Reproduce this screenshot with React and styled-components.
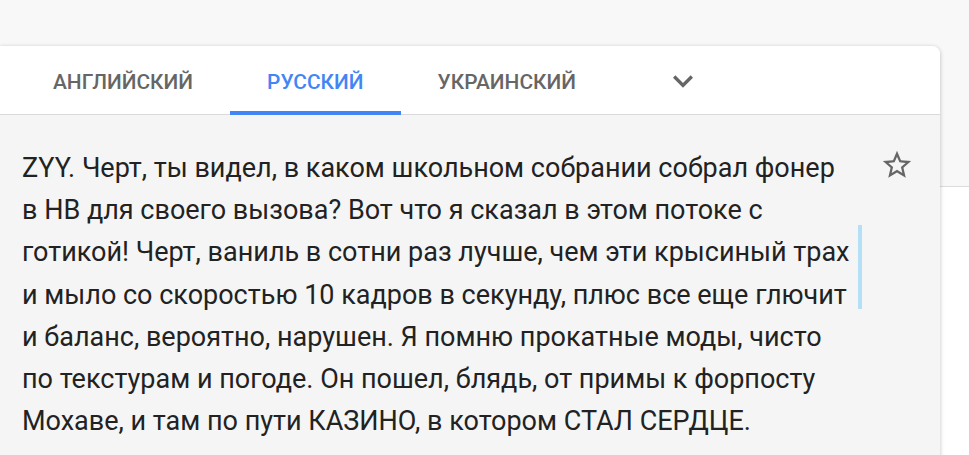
import styled, { createGlobalStyle } from "styled-components"

const GlobalStyle = createGlobalStyle`
    html, body {
        margin: 0;
        padding: 0;
        background: #f8f8f8;
        overflow: hidden;
        font-family: Roboto, "Liberation Sans", sans-serif;
    }
`

const Page = styled.div`
    display: flex;
    align-items: flex-start;
    padding-top: 46px;
    height: 455px;
    box-sizing: border-box;
`

const Card = styled.div`
    width: 940px;
    flex-shrink: 0;
    background: #f5f5f5;
    border-radius: 0 8px 0 0;
    box-shadow: 0 1px 4px rgba(0, 0, 0, 0.25);
    position: relative;
    z-index: 1;
    min-height: 420px;
`

const SidePanel = styled.div`
    flex: 1;
    margin-top: 140px;
    height: 300px;
    background: #fff;
    border-top: 1px solid #dcdcdc;
`

const TabBar = styled.div`
    display: flex;
    height: 68px;
    padding-left: 16px;
    background: #fff;
    border-radius: 0 8px 0 0;
    border-bottom: 1px solid #dadada;
`

const Tab = styled.div`
    position: relative;
    display: flex;
    align-items: center;
    padding: 3px 37px 0;
    font-size: 20.9px;
    font-weight: 500;
    text-transform: uppercase;
    color: ${p => (p.$active ? "#4285f4" : "#666")};
    &::after {
        content: "";
        display: ${p => (p.$active ? "block" : "none")};
        position: absolute;
        left: 0;
        right: 0;
        bottom: -1px;
        height: 4px;
        background: #4285f4;
    }
`

const MoreButton = styled.div`
    display: flex;
    align-items: center;
    justify-content: center;
    width: 140px;
    color: #666;
    svg {
        margin-top: 2px;
    }
`

const Body = styled.div`
    display: flex;
    padding: 32px 0 20px 22px;
`

const Translation = styled.div`
    position: relative;
    width: 840px;
    font-size: 27px;
    line-height: 42.2px;
    color: #222;
`

const Caret = styled.div`
    position: absolute;
    right: 0;
    top: 78px;
    width: 4px;
    height: 84px;
    background: #b3e0f7;
`

const StarButton = styled.div`
    margin-left: 18px;
    margin-top: 1px;
    color: #666;
`

const lines = [
    "ZYY. Черт, ты видел, в каком школьном собрании собрал фонер",
    "в НВ для своего вызова? Вот что я сказал в этом потоке с",
    "готикой! Черт, ваниль в сотни раз лучше, чем эти крысиный трах",
    "и мыло со скоростью 10 кадров в секунду, плюс все еще глючит",
    "и баланс, вероятно, нарушен. Я помню прокатные моды, чисто",
    "по текстурам и погоде. Он пошел, блядь, от примы к форпосту",
    "Мохаве, и там по пути КАЗИНО, в котором СТАЛ СЕРДЦЕ.",
]

export default function App() {
    return (
        <>
            <GlobalStyle />
            <Page>
                <Card>
                    <TabBar>
                        <Tab>Английский</Tab>
                        <Tab $active>Русский</Tab>
                        <Tab>Украинский</Tab>
                        <MoreButton>
                            <svg width="40" height="40" viewBox="0 0 24 24" fill="currentColor">
                                <path d="M16.59 8.59L12 13.17 7.41 8.59 6 10l6 6 6-6z" />
                            </svg>
                        </MoreButton>
                    </TabBar>
                    <Body>
                        <Translation>
                            {lines.map((l, i) => (
                                <div key={i}>{l}</div>
                            ))}
                            <Caret />
                        </Translation>
                        <StarButton>
                            <svg width="34" height="34" viewBox="0 0 24 24" fill="currentColor">
                                <path d="M22 9.24l-7.19-.62L12 2 9.19 8.63 2 9.24l5.46 4.73L5.82 21 12 17.27 18.18 21l-1.63-7.03L22 9.24zM12 15.4l-3.76 2.27 1-4.28-3.32-2.88 4.38-.38L12 6.1l1.71 4.04 4.38.38-3.32 2.88 1 4.28L12 15.4z" />
                            </svg>
                        </StarButton>
                    </Body>
                </Card>
                <SidePanel />
            </Page>
        </>
    )
}
